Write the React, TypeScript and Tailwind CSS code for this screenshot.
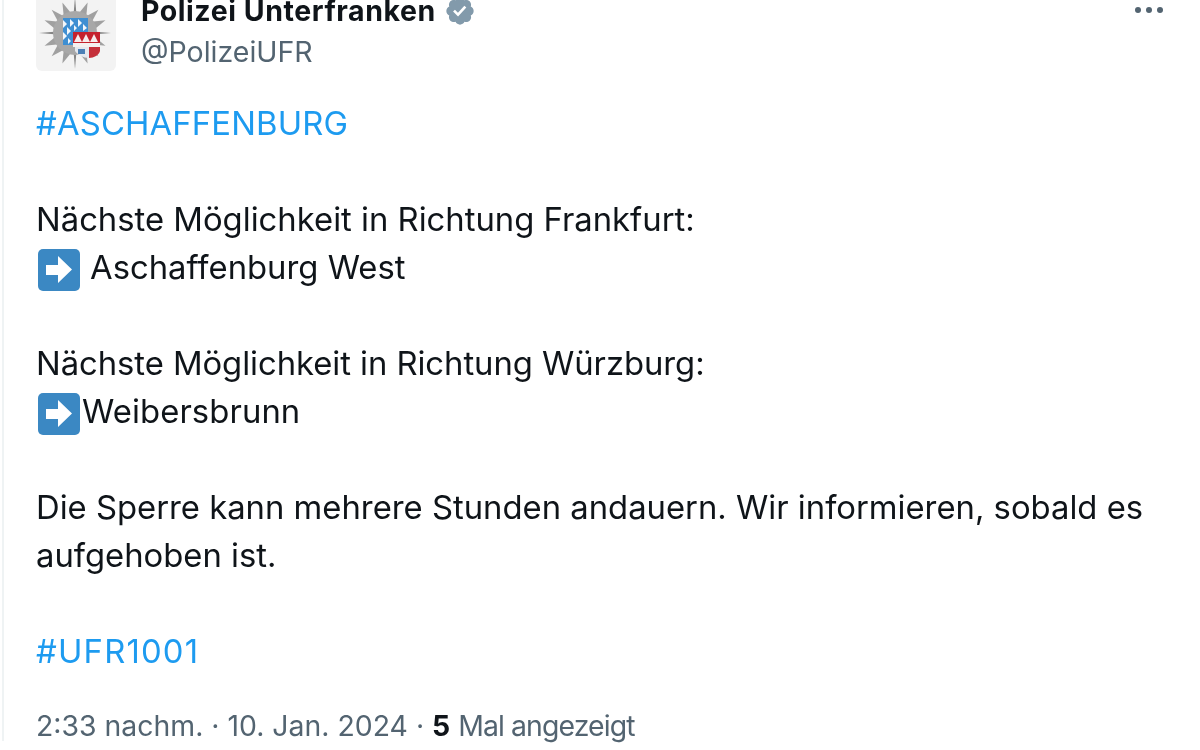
import React from 'react'

const ArrowEmoji = () => (
  <svg viewBox="0 0 42 42" className="inline-block w-[42px] h-[42px] shrink-0">
    <rect x="0" y="0" width="42" height="42" rx="5" fill="#3b88c3" />
    <path d="M8 16h12V7l14 13.500L20 34v-8H8z" fill="#fff" />
  </svg>
)

const PoliceBadge = () => {
  const rays = Array.from({ length: 16 }, (_, i) => i * 22.5)
  return (
    <svg viewBox="0 0 80 80" className="w-[80px] h-[80px] blur-[0.6px]">
      <g transform="translate(39 42)">
        {rays.map((a) => (
          <polygon
            key={a}
            points={a % 90 === 0 ? '-3,0 0,-36 3,0' : '-10,0 0,-33 10,0'}
            fill={a % 90 === 0 ? '#858585' : '#a0a0a0'}
            transform={`rotate(${a})`}
          />
        ))}
        <circle r="22" fill="#a8a8a8" />
      </g>
      {/* lozenges */}
      <path d="M27 27h25v14H38v13H27z" fill="#3f8fd2" />
      <path d="M27 29l4 4-4 4zM27 41l4 4-4 4zM34 28l4 4-4 4zM42 28l4 4-4 4zM38 34l3 3-3 3zM31 36l4 4-4 4zM32 47l3 3-3 3zM47 33l4 4-4 3z" fill="#f3f7fb" />
      {/* franconian rake */}
      <path d="M37 41h27v11H37z" fill="#c5222d" />
      <path d="M38 51l4-8 4 8 4-8 4 8 4-8 4 8z" fill="#f6ecec" />
      <path d="M37 52h27v4H37z" fill="#f4f0f0" />
      <path d="M39 56h14v11c-6 0-11-3-14-7z" fill="#e4e8ee" />
      <path d="M42 58h7v5h-7z" fill="#4b7fb5" />
      <path d="M53 56h11v4c-1 4-6 7-11 7z" fill="#c5303a" />
    </svg>
  )
}

const Verified = () => (
  <svg viewBox="0 0 22 22" className="w-[32px] h-[32px] shrink-0" fill="#829aab">
    <path d="M20.396 11c-.018-.646-.215-1.275-.57-1.816-.354-.54-.852-.972-1.438-1.246.223-.607.27-1.264.14-1.897-.131-.634-.437-1.218-.882-1.687-.47-.445-1.053-.75-1.687-.882-.633-.13-1.29-.083-1.897.14-.273-.587-.704-1.086-1.245-1.44S11.647 1.62 11 1.604c-.646.017-1.273.213-1.813.568s-.969.854-1.24 1.44c-.608-.223-1.267-.272-1.902-.14-.635.13-1.22.436-1.69.882-.445.47-.749 1.055-.878 1.688-.13.633-.08 1.29.144 1.896-.587.274-1.087.705-1.443 1.245-.356.54-.555 1.17-.574 1.817.02.647.218 1.276.574 1.817.356.54.856.972 1.443 1.245-.224.606-.274 1.263-.144 1.896.13.634.433 1.218.877 1.688.47.443 1.054.747 1.687.878.633.132 1.29.084 1.897-.136.274.586.705 1.084 1.246 1.439.54.354 1.17.551 1.816.569.647-.016 1.276-.213 1.817-.567s.972-.854 1.245-1.44c.604.239 1.266.296 1.903.164.636-.132 1.22-.447 1.68-.907.46-.46.776-1.044.908-1.681s.075-1.299-.165-1.903c.586-.274 1.084-.705 1.439-1.246.354-.54.551-1.17.569-1.816zM9.662 14.85l-3.429-3.428 1.293-1.302 2.072 2.072 4.4-4.794 1.347 1.246z" />
  </svg>
)

const Line = ({ children }: { children?: React.ReactNode }) => (
  <div className="h-12 flex items-center whitespace-nowrap">{children}</div>
)

export default function App() {
  return (
    <div className="h-[750px] overflow-hidden bg-white font-['Inter',sans-serif] text-[#0f1419]">
      <div className="ml-[2px] h-full border-l-2 border-[#eff3f4] pl-[32px] pr-[37px] blur-[0.4px]">
        <div className="flex h-[80px] mt-[-9px]">
          <div className="w-[80px] h-[80px] rounded-[6px] bg-[#f3f3f3] shrink-0 overflow-hidden">
            <PoliceBadge />
          </div>
          <div className="ml-[25px] flex-1">
            <div className="flex items-center gap-[8px] h-[40px]">
              <span className="text-[28.500px] font-bold tracking-[0.55px]">Polizei Unterfranken</span>
              <Verified />
            </div>
            <div className="text-[28.500px] text-[#536471] h-[40px] leading-[40px] mt-[1px]">@PolizeiUFR</div>
          </div>
          <div className="flex gap-[5px] mt-[16px]">
            <span className="w-[6px] h-[6px] rounded-full bg-[#536471]" />
            <span className="w-[6px] h-[6px] rounded-full bg-[#536471]" />
            <span className="w-[6px] h-[6px] rounded-full bg-[#536471]" />
          </div>
        </div>

        <div className="mt-[29px] text-[32.800px]">
          <Line><span className="text-[#1d9bf0] tracking-[0.15px]">#ASCHAFFENBURG</span></Line>
          <Line />
          <Line>Nächste Möglichkeit in Richtung Frankfurt:</Line>
          <Line><span className="ml-[2px]"><ArrowEmoji /></span><span className="ml-[10px]">Aschaffenburg West</span></Line>
          <Line />
          <Line><span className="tracking-[-0.05px]">Nächste Möglichkeit in Richtung Würzburg:</span></Line>
          <Line><span className="ml-[2px]"><ArrowEmoji /></span><span className="ml-[2px] tracking-[0.1px]">Weibersbrunn</span></Line>
          <Line />
          <Line>Die Sperre kann mehrere Stunden andauern. Wir informieren, sobald es</Line>
          <Line>aufgehoben ist.</Line>
          <Line />
          <Line><span className="text-[#1d9bf0] tracking-[1.2px]">#UFR1001</span></Line>
        </div>

        <div className="mt-[30px] text-[28.400px] leading-[40px] text-[#536471] whitespace-nowrap">
          2:33 nachm. · 10. Jan. 2024 · <span className="font-bold text-[#0f1419]">5</span> <span className="tracking-[-0.9px]">Mal angezeigt</span>
        </div>
      </div>
    </div>
  )
}
